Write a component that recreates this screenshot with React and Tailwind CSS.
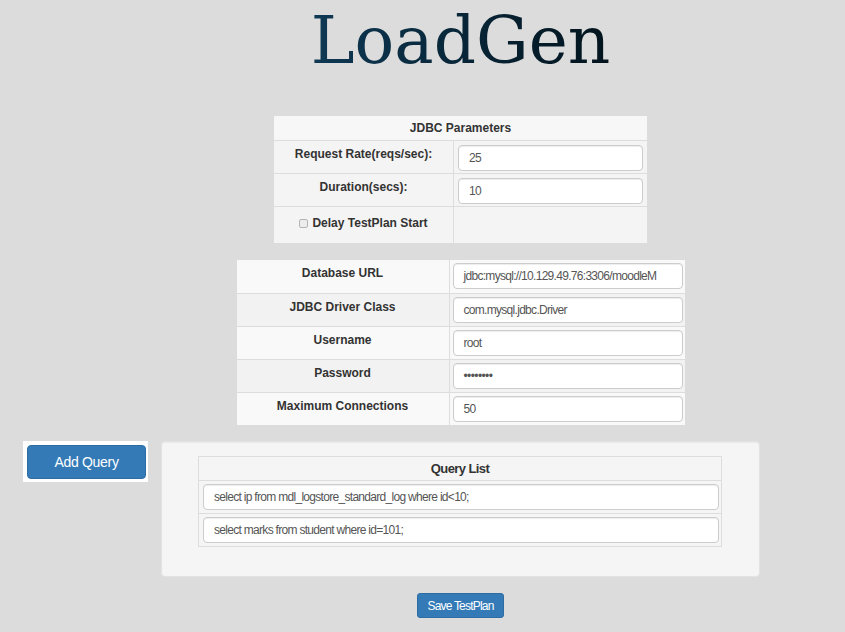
import React from "react";

const font = { fontFamily: '"Liberation Sans", Arial, sans-serif' };

function Field({ value, type = "text", w }) {
  return (
    <div
      className={`h-[26px] ${w} rounded-[4px] border border-[#cccccc] bg-white pl-[10px] flex items-center text-[12px] font-normal tracking-[-0.7px] text-[#555555] shadow-[inset_0_1px_1px_rgba(0,0,0,0.075)] overflow-hidden whitespace-nowrap`}
    >
      {type === "password" ? <span className="tracking-[-0.6px]">••••••••</span> : value}
    </div>
  );
}

export default function App() {
  const dbRows = [
    ["Database URL", "jdbc:mysql://10.129.49.76:3306/moodleM"],
    ["JDBC Driver Class", "com.mysql.jdbc.Driver"],
    ["Username", "root"],
    ["Password", "password", "password"],
    ["Maximum Connections", "50"],
  ];
  return (
    <div className="min-h-[632px] w-full bg-[#dcdcdc] text-[#333333]" style={font}>
      <div className="w-[760px] pl-[161px]">
        <div className="h-[116px] pt-[2px] flex justify-center">
          <div
            className="text-[66px] leading-[77px] bg-gradient-to-r from-[#0f3955] to-[#03141d] bg-clip-text text-transparent"
            style={{ fontFamily: '"DejaVu Serif", serif' }}
          >
            LoadGen
          </div>
        </div>

        {/* JDBC Parameters */}
        <div className="mx-auto w-[373px] bg-[#f4f4f4] text-[12px] font-bold">
          <div className="h-[24px] flex items-center justify-center bg-[#f7f7f7]">
            JDBC Parameters
          </div>
          <div className="grid grid-cols-[180px_193px] border-t border-[#dddddd] h-[33px]">
            <div className="text-center pt-[5px] leading-[17px] border-r border-[#dddddd]">
              Request Rate(reqs/sec):
            </div>
            <div className="pl-[4px] pt-[4px]">
              <Field value="25" w="w-[185px]" />
            </div>
          </div>
          <div className="grid grid-cols-[180px_193px] border-t border-[#dddddd] h-[33px]">
            <div className="text-center pt-[5px] leading-[17px] border-r border-[#dddddd]">
              Duration(secs):
            </div>
            <div className="pl-[4px] pt-[4px]">
              <Field value="10" w="w-[185px]" />
            </div>
          </div>
          <div className="grid grid-cols-[180px_193px] border-t border-[#dddddd] h-[37px]">
            <div className="flex justify-center items-start pt-[8px] leading-[17px] border-r border-[#dddddd]">
              <span className="mt-[4px] mr-[4px] inline-block w-[9px] h-[9px] rounded-[2px] border border-[#b5b5b5] bg-[#ececec]" />
              <span>Delay TestPlan Start</span>
            </div>
            <div />
          </div>
        </div>

        {/* DB table */}
        <div className="mx-auto mt-[17px] w-[448px] text-[12px] font-bold">
          {dbRows.map(([label, value, type], i) => (
            <div
              key={label}
              className={`grid grid-cols-[213px_235px] h-[33px] ${i > 0 ? "border-t border-[#dddddd]" : ""} ${i % 2 === 0 ? "bg-[#f9f9f9]" : "bg-[#f2f2f2]"}`}
            >
              <div className="text-center pt-[5px] leading-[17px] border-r border-[#dddddd]">
                {label}
              </div>
              <div className="pl-[3px] pt-[3px]">
                <Field value={value} type={type} w="w-[230px]" />
              </div>
            </div>
          ))}
        </div>
      </div>

      {/* Query section */}
      <div className="mt-[16px] flex items-start">
        <div className="w-[161px] pl-[23px]">
          <div className="w-[125px] h-[41px] bg-white p-[4px] pr-[2px]">
            <button className="w-[119px] h-[34px] rounded-[4px] bg-[#337ab7] text-white text-[14px] tracking-[-0.3px] border border-[#2e6da4]">
              Add Query
            </button>
          </div>
        </div>
        <div className="w-[599px] h-[136px] rounded-[4px] border border-[#e3e3e3] bg-[#f5f5f5] shadow-[inset_0_1px_1px_rgba(0,0,0,0.05)] pt-[14px] pl-[36px]">
          <div className="w-[524px] border border-[#dddddd] text-[12px]">
            <div className="h-[23px] flex items-center justify-center font-bold text-[13px] tracking-[-0.6px] bg-[#f5f5f5]">
              Query List
            </div>
            {[
              "select ip from mdl_logstore_standard_log where id<10;",
              "select marks from student where id=101;",
            ].map((q) => (
              <div key={q} className="h-[33px] border-t border-[#dddddd] pl-[4px] pt-[3px]">
                <Field value={q} w="w-[516px]" />
              </div>
            ))}
          </div>
        </div>
      </div>

      <div className="w-[760px] pl-[161px] mt-[16px] flex justify-center">
        <button className="w-[87px] h-[25px] rounded-[3px] bg-[#337ab7] border border-[#2e6da4] text-white text-[12px] tracking-[-0.8px]">
          Save TestPlan
        </button>
      </div>
    </div>
  );
}
